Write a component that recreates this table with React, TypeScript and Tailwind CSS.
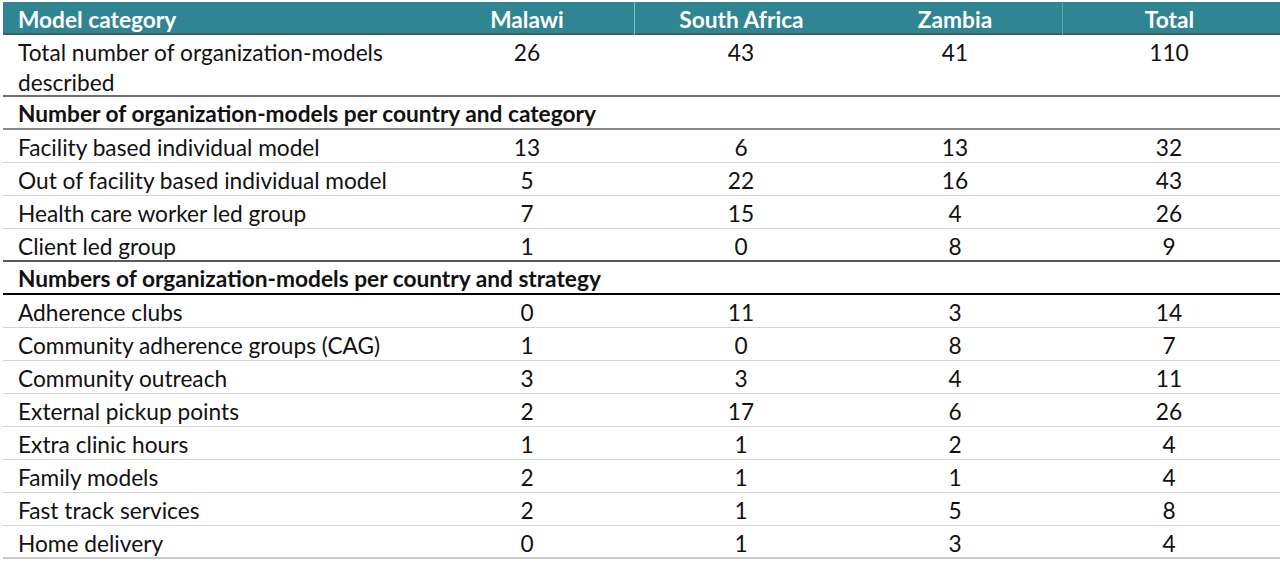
const sectionOne = [
  ["Facility based individual model", "13", "6", "13", "32"],
  ["Out of facility based individual model", "5", "22", "16", "43"],
  ["Health care worker led group", "7", "15", "4", "26"],
  ["Client led group", "1", "0", "8", "9"],
];

const sectionTwo = [
  ["Adherence clubs", "0", "11", "3", "14"],
  ["Community adherence groups (CAG)", "1", "0", "8", "7"],
  ["Community outreach", "3", "3", "4", "11"],
  ["External pickup points", "2", "17", "6", "26"],
  ["Extra clinic hours", "1", "1", "2", "4"],
  ["Family models", "2", "1", "1", "4"],
  ["Fast track services", "2", "1", "5", "8"],
  ["Home delivery", "0", "1", "3", "4"],
];

const cols = "grid grid-cols-[417px_214px_214px_214px_214px]";

function Row({ cells, border }: { cells: string[]; border: string }) {
  return (
    <div className={`${cols} h-[33px] items-center pt-[3px] border-b ${border}`}>
      <div className="pl-[15px]">{cells[0]}</div>
      {cells.slice(1).map((c, i) => (
        <div key={i} className="text-center">
          {c}
        </div>
      ))}
    </div>
  );
}

export default function App() {
  return (
    <div
      className="w-[1280px] h-[563px] bg-white pt-[2px] pl-[3px] text-[22.7px] leading-[30px] text-[#111]"
      style={{ fontFamily: "Lato, 'Open Sans', sans-serif" }}
    >
      {/* HEADER */}
      <div className={`${cols} h-[33px] items-center bg-[#2f8591] border-b-2 border-[#3d5c63] text-white font-bold`}>
        <div className="pl-[15px] pt-[3px]">Model category</div>
        <div className="h-full flex items-center justify-center pt-[3px]">Malawi</div>
        <div className="h-full flex items-center justify-center pt-[3px] border-l border-[#7cc0c9]">South Africa</div>
        <div className="h-full flex items-center justify-center pt-[3px]">Zambia</div>
        <div className="h-full flex items-center justify-center pt-[3px] border-l border-[#5aa6b0]">Total</div>
      </div>

      {/* TOTALS */}
      <div className={`${cols} h-[62px] border-b-2 border-[#6e6e6e] pt-[3px]`}>
        <div className="pl-[15px]">
          Total number of organization-models
          <br />
          described
        </div>
        <div className="text-center">26</div>
        <div className="text-center">43</div>
        <div className="text-center">41</div>
        <div className="text-center">110</div>
      </div>

      {/* CATEGORY */}
      <div className="h-[33px] flex items-center pl-[15px] pt-[3px] font-bold border-b-2 border-[#8a8a8a]">
        Number of organization-models per country and category
      </div>
      {sectionOne.map((r, i) => (
        <Row
          key={i}
          cells={r}
          border={i === sectionOne.length - 1 ? "border-b-2 border-[#5a5a5a]" : "border-[#d4d4d4]"}
        />
      ))}

      {/* STRATEGY */}
      <div className="h-[33px] flex items-center pl-[15px] pt-[3px] font-bold border-b-2 border-black">
        Numbers of organization-models per country and strategy
      </div>
      {sectionTwo.map((r, i) => (
        <Row
          key={i}
          cells={r}
          border={i === sectionTwo.length - 1 ? "border-b-2 border-[#c8c8c8]" : "border-[#d4d4d4]"}
        />
      ))}
    </div>
  );
}
